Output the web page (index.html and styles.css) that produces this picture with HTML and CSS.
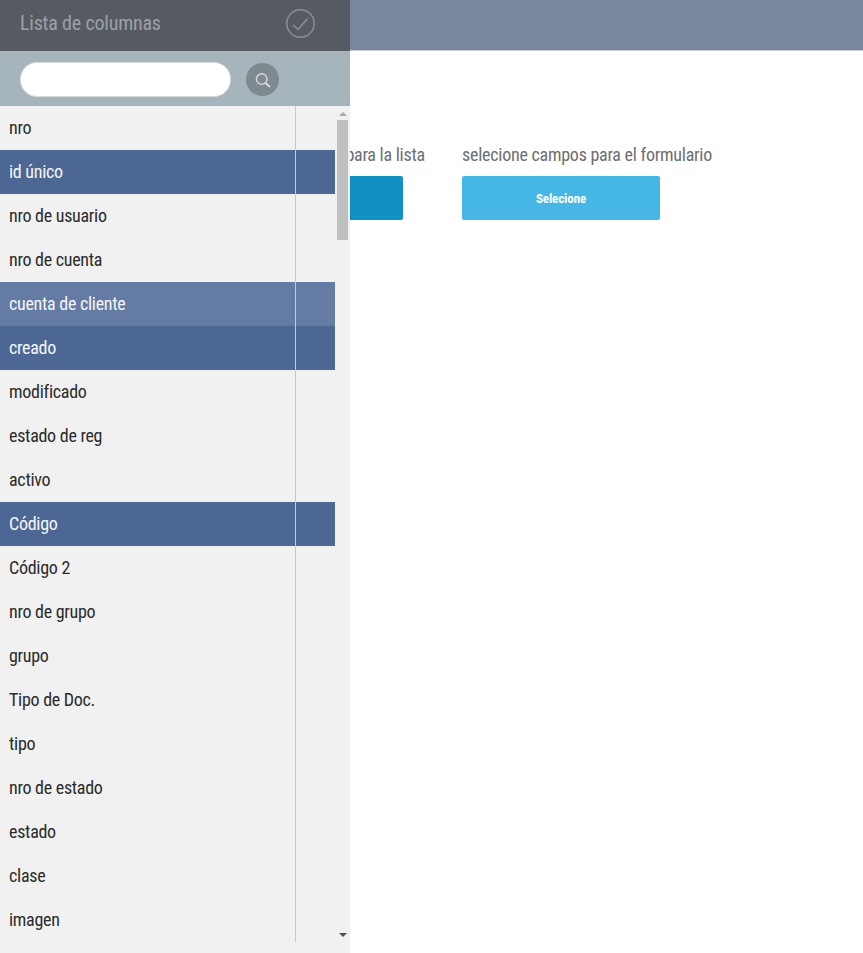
FILE: index.html
```html
<!DOCTYPE html>
<html lang="es">
<head>
<meta charset="utf-8">
<title>Lista de columnas</title>
<link rel="stylesheet" href="styles.css">
</head>
<body>
<header class="topbar"></header>
<main class="content">
  <div class="field">
    <div class="field-label field-label-inset">selecione campos para la lista</div>
    <button class="btn btn-dark">Selecione</button>
  </div>
  <div class="field">
    <div class="field-label">selecione campos para el formulario</div>
    <button class="btn btn-light">Selecione</button>
  </div>
</main>
<aside class="panel">
  <div class="panel-head">
    <span class="panel-title">Lista de columnas</span>
    <svg class="check" width="29" height="29" viewBox="0 0 29 29"><circle cx="14.5" cy="14.5" r="13.7" fill="none" stroke="#8c8f95" stroke-width="1.5"/><path d="M7 16l5 4.5 9.7-11" fill="none" stroke="#8c8f95" stroke-width="1.5"/></svg>
  </div>
  <div class="panel-search">
    <input class="search-input" type="text">
    <span class="search-btn"><svg width="17" height="17" viewBox="0 0 17 17"><circle cx="7.7" cy="8" r="5.3" fill="none" stroke="#d5dadd" stroke-width="1.4"/><path d="M11.6 12l4.4 3.9" fill="none" stroke="#d5dadd" stroke-width="2"/></svg></span>
  </div>
  <div class="list-wrap">
    <ul class="list">
      <li class="row">nro</li>
      <li class="row sel">id único</li>
      <li class="row">nro de usuario</li>
      <li class="row">nro de cuenta</li>
      <li class="row hov">cuenta de cliente</li>
      <li class="row sel">creado</li>
      <li class="row">modificado</li>
      <li class="row">estado de reg</li>
      <li class="row">activo</li>
      <li class="row sel">Código</li>
      <li class="row">Código 2</li>
      <li class="row">nro de grupo</li>
      <li class="row">grupo</li>
      <li class="row">Tipo de Doc.</li>
      <li class="row">tipo</li>
      <li class="row">nro de estado</li>
      <li class="row">estado</li>
      <li class="row">clase</li>
      <li class="row">imagen</li>
    </ul>
    <div class="divider"></div>
    <div class="sb-up"></div>
    <div class="sb-thumb"></div>
    <div class="sb-down"></div>
  </div>
</aside>
</body>
</html>
```
FILE: styles.css
```css
html, body { margin: 0; padding: 0; height: 953px; overflow: hidden; background: #fff; }
body { font-family: Roboto, sans-serif; font-stretch: 75%; }
.topbar { height: 50px; background: #7a889f; border-bottom: 1px solid #c9ced6; }
.content { display: flex; gap: 59px; padding: 94px 0 0 205px; }
.field { width: 198px; }
.field-label { font-size: 18px; letter-spacing: -0.25px; line-height: 20px; height: 20px; color: #6d6e71; white-space: nowrap; margin-bottom: 11px; }
.field-label-inset { padding-left: 12px; }
.btn { display: block; width: 198px; height: 44px; border: 0; border-radius: 2px; color: #fff; font: 700 13px Roboto, sans-serif; font-stretch: 75%; letter-spacing: -0.1px; }
.btn-dark { background: #1190c3; }
.btn-light { background: #46b7e5; }
.panel { position: absolute; left: 0; top: 0; width: 350px; height: 953px; background: #f1f1f1; }
.panel-head { height: 51px; background: #565a63; display: flex; align-items: center; justify-content: space-between; padding: 0 35px 0 20px; }
.panel-title { font-size: 20px; letter-spacing: -0.2px; color: #9ca1a6; margin-top: -5px; }
.check { display: block; margin-top: -4px; }
.panel-search { box-sizing: border-box; height: 55px; background: #a6b4bb; display: flex; align-items: center; gap: 15px; padding: 2px 0 0 20px; }
.search-input { box-sizing: border-box; width: 211px; height: 35px; border: 1px solid #d5dadd; border-radius: 17px; background: #fff; padding: 0; }
.search-btn { width: 33px; height: 33px; border-radius: 50%; background: #7f8990; display: flex; align-items: center; justify-content: center; }
.list-wrap { position: relative; height: 836px; }
.list { list-style: none; margin: 0; padding: 0; width: 335px; }
.row { height: 44px; line-height: 44px; padding-left: 9px; font-size: 18px; letter-spacing: -0.28px; color: #2b2b2b; }
.sel { background: #4d6794; color: #f4f6f9; }
.hov { background: #647ba3; color: #f4f6f9; }
.divider { position: absolute; left: 295px; top: 0; bottom: 0; width: 1px; background: #c9c9c9; }
.sb-thumb { position: absolute; left: 337px; top: 14px; width: 11px; height: 120px; background: #bfbfbf; }
.sb-up { position: absolute; left: 339px; top: 6px; border: 4px solid transparent; border-top: 0; border-bottom-color: #a9a9a9; }
.sb-down { position: absolute; left: 339px; top: 827px; border: 4px solid transparent; border-bottom: 0; border-top-color: #505050; }
```
